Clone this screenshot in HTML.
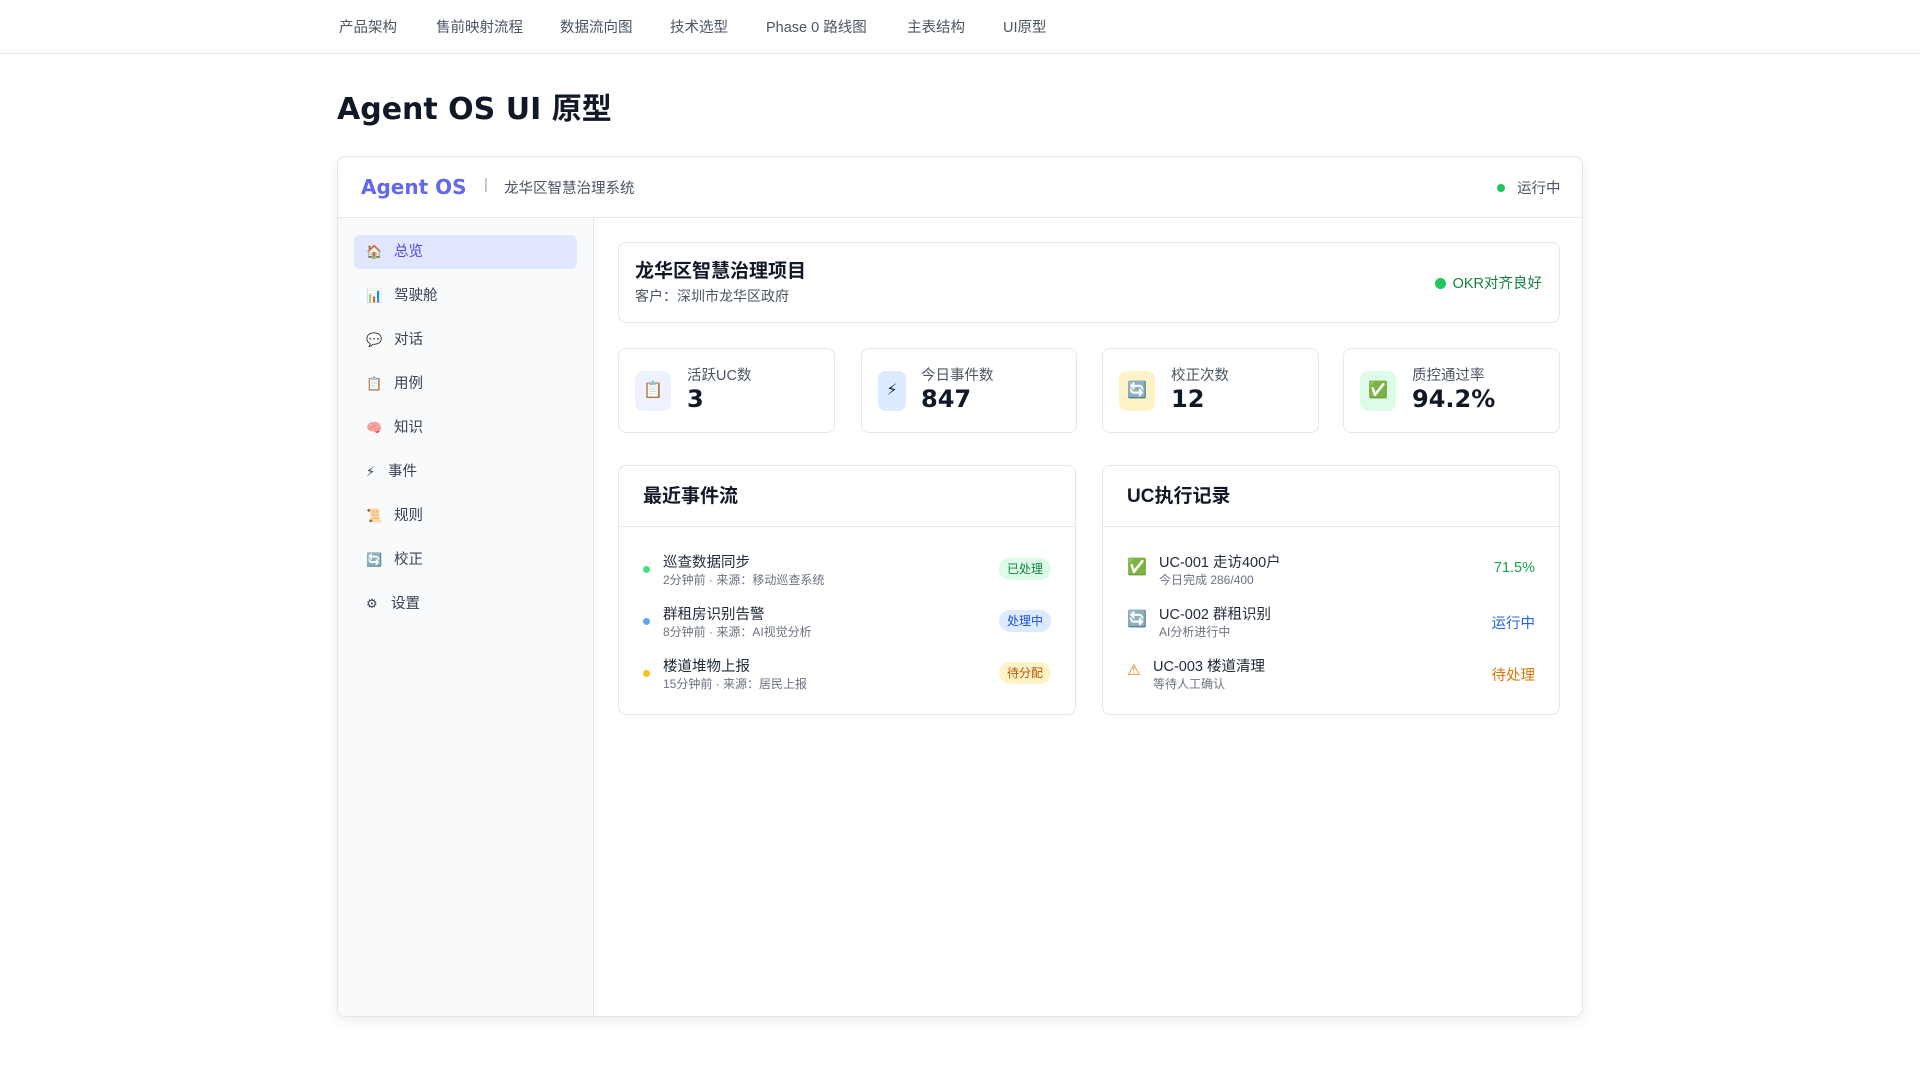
<!DOCTYPE html>
<html><head><meta charset="utf-8"><style>
*{box-sizing:border-box;margin:0;padding:0}
body{width:1920px;height:1080px;background:#fff;font-family:"Liberation Sans","DejaVu Sans","Noto Sans CJK SC",sans-serif;color:#1f2937;position:relative;overflow:hidden}
.nav{height:54px;border-bottom:1px solid #e5e7eb;position:relative}
.nav span{position:absolute;top:16px;font-size:14.5px;color:#4b5563}
h1{position:absolute;left:337px;top:84px;font-size:30px;font-weight:bold;color:#111827;font-family:"DejaVu Sans","Noto Sans CJK SC",sans-serif}
.app{position:absolute;left:337px;top:156px;width:1246px;height:861px;border:1px solid #e5e7eb;border-radius:8px;box-shadow:0 4px 12px rgba(0,0,0,.08);overflow:hidden}
.hdr{height:61px;border-bottom:1px solid #e5e7eb;position:relative}
.side{position:absolute;left:0;top:61px;width:256px;bottom:0;background:#f8fafc;border-right:1px solid #e5e7eb}
.it{position:absolute;left:16px;width:223px;height:34px;border-radius:6px;font-size:14.5px;color:#374151;line-height:34px;padding-left:12px}
.it i{font-style:normal;display:inline-block;width:28px;font-size:13px}
.it.on{background:#e0e7ff;color:#4f46e5}
.box{position:absolute;border:1px solid #e5e7eb;border-radius:8px;background:#fff}
.stat .ic{position:absolute;left:16px;top:22px;width:36px;height:40px;border-radius:8px;text-align:center;line-height:40px;font-size:16px}
.stat .l{position:absolute;left:68px;top:15px;font-size:14.5px;color:#4b5563}
.stat .v{position:absolute;left:68px;top:36px;font-size:24px;font-weight:bold;color:#111827;font-family:"DejaVu Sans",sans-serif}
.ph{height:61px;border-bottom:1px solid #e5e7eb;font-size:19px;font-weight:bold;padding:15px 0 0 24px;color:#111827}
.row{position:absolute;left:0;right:0;height:40px}
.row .t{position:absolute;top:0;font-size:14.5px;color:#1f2937}
.row .s{position:absolute;top:20px;font-size:12px;color:#6b7280}
.dot{position:absolute;left:24px;top:15px;width:7px;height:7px;border-radius:50%}
.bd{position:absolute;right:24px;top:7px;height:22px;padding:0 8px;border-radius:11px;font-size:12px;line-height:22px}
.rt{position:absolute;right:24px;top:9px;font-size:14.5px}
</style></head><body>
<div class="nav">
<span style="left:339px">产品架构</span><span style="left:436px">售前映射流程</span><span style="left:560px">数据流向图</span><span style="left:670px">技术选型</span><span style="left:766px">Phase 0 路线图</span><span style="left:907px">主表结构</span><span style="left:1003px">UI原型</span>
</div>
<h1>Agent OS UI 原型</h1>
<div class="app">
<div class="hdr">
<div style="position:absolute;left:23px;top:18px;font-size:20px;font-weight:bold;color:#6366f1;font-family:'DejaVu Sans',sans-serif">Agent OS</div>
<div style="position:absolute;left:146px;top:19px;font-size:15px;color:#9ca3af">|</div>
<div style="position:absolute;left:166px;top:20px;font-size:14.5px;color:#4b5563">龙华区智慧治理系统</div>
<div style="position:absolute;left:1159px;top:27px;width:8px;height:8px;border-radius:50%;background:#22c55e"></div>
<div style="position:absolute;left:1179px;top:20px;font-size:14.5px;color:#4b5563">运行中</div>
</div>
<div class="side">
<div class="it on" style="top:17px"><i>🏠</i>总览</div>
<div class="it" style="top:61px"><i>📊</i>驾驶舱</div>
<div class="it" style="top:105px"><i>💬</i>对话</div>
<div class="it" style="top:149px"><i>📋</i>用例</div>
<div class="it" style="top:193px"><i>🧠</i>知识</div>
<div class="it" style="top:237px"><i style="width:22px">⚡</i>事件</div>
<div class="it" style="top:281px"><i>📜</i>规则</div>
<div class="it" style="top:325px"><i>🔄</i>校正</div>
<div class="it" style="top:369px"><i style="width:25px">⚙</i>设置</div>
</div>
<div class="box" style="left:280px;top:85px;width:942px;height:81px">
<div style="position:absolute;left:16px;top:13px;font-size:19px;font-weight:bold;color:#111827">龙华区智慧治理项目</div>
<div style="position:absolute;left:16px;top:43px;font-size:14px;color:#4b5563">客户：深圳市龙华区政府</div>
<div style="position:absolute;right:17px;top:29px;font-size:14.5px;color:#15803d"><span style="display:inline-block;width:11px;height:11px;border-radius:50%;background:#22c55e;margin-right:7px;vertical-align:-1px"></span>OKR对齐良好</div>
</div>
<div class="box stat" style="left:280px;top:191px;width:217px;height:85px"><div class="ic" style="background:#eef2ff">📋</div><div class="l">活跃UC数</div><div class="v">3</div></div>
<div class="box stat" style="left:523px;top:191px;width:216px;height:85px"><div class="ic" style="background:#dbeafe;width:28px;left:16px">⚡</div><div class="l" style="left:59px">今日事件数</div><div class="v" style="left:59px">847</div></div>
<div class="box stat" style="left:764px;top:191px;width:217px;height:85px"><div class="ic" style="background:#fef3c7">🔄</div><div class="l">校正次数</div><div class="v">12</div></div>
<div class="box stat" style="left:1005px;top:191px;width:217px;height:85px"><div class="ic" style="background:#dcfce7">✅</div><div class="l">质控通过率</div><div class="v">94.2%</div></div>
<div class="box" style="left:280px;top:308px;width:458px;height:250px">
<div class="ph">最近事件流</div>
<div class="row" style="top:85px"><div class="dot" style="background:#4ade80"></div><div class="t" style="left:44px">巡查数据同步</div><div class="s" style="left:44px">2分钟前 · 来源：移动巡查系统</div><div class="bd" style="background:#dcfce7;color:#15803d">已处理</div></div>
<div class="row" style="top:137px"><div class="dot" style="background:#60a5fa"></div><div class="t" style="left:44px">群租房识别告警</div><div class="s" style="left:44px">8分钟前 · 来源：AI视觉分析</div><div class="bd" style="background:#dbeafe;color:#1d4ed8">处理中</div></div>
<div class="row" style="top:189px"><div class="dot" style="background:#fbbf24"></div><div class="t" style="left:44px">楼道堆物上报</div><div class="s" style="left:44px">15分钟前 · 来源：居民上报</div><div class="bd" style="background:#fef3c7;color:#b45309">待分配</div></div>
</div>
<div class="box" style="left:764px;top:308px;width:458px;height:250px">
<div class="ph">UC执行记录</div>
<div class="row" style="top:85px"><div style="position:absolute;left:24px;top:6px;font-size:16px">✅</div><div class="t" style="left:56px">UC-001 走访400户</div><div class="s" style="left:56px">今日完成 286/400</div><div class="rt" style="color:#16a34a">71.5%</div></div>
<div class="row" style="top:137px"><div style="position:absolute;left:24px;top:6px;font-size:16px">🔄</div><div class="t" style="left:56px">UC-002 群租识别</div><div class="s" style="left:56px">AI分析进行中</div><div class="rt" style="color:#2563eb">运行中</div></div>
<div class="row" style="top:189px"><div style="position:absolute;left:24px;top:6px;font-size:15px;color:#d97706">⚠</div><div class="t" style="left:50px">UC-003 楼道清理</div><div class="s" style="left:50px">等待人工确认</div><div class="rt" style="color:#d97706">待处理</div></div>
</div>
</div>
</body></html>
